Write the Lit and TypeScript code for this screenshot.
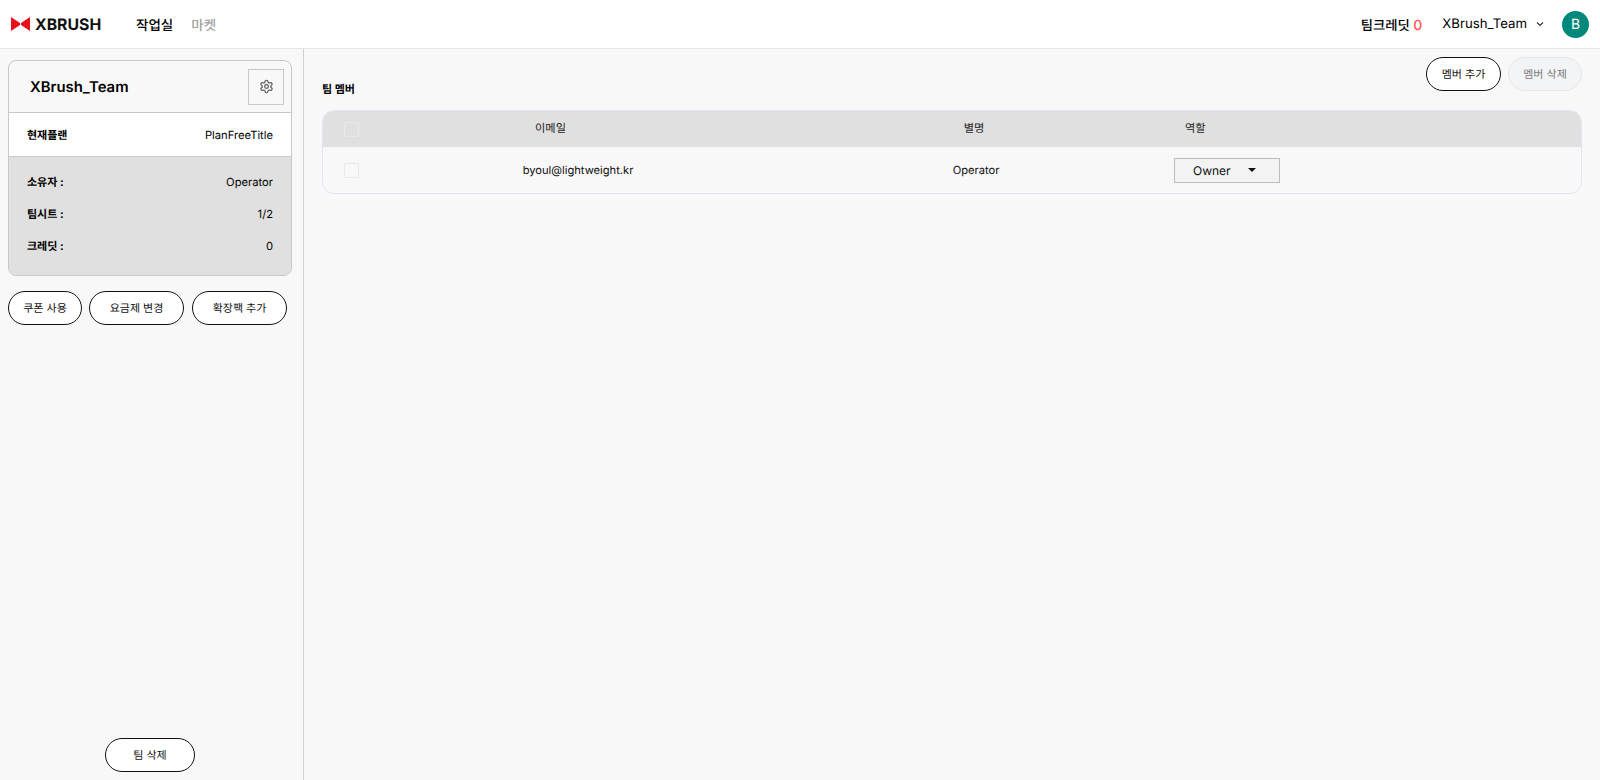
import { LitElement, html, css } from "lit";
import { customElement } from "lit/decorators.js";

@customElement("app-root")
export class AppRoot extends LitElement {
  static styles = css`
    :host {
      display: flex;
      flex-direction: column;
      width: 1600px;
      height: 780px;
      overflow: hidden;
      background: #f8f8f8;
      color: #000;
      font-family: Inter, "Noto Sans CJK KR", sans-serif;
      text-rendering: geometricPrecision;
    }
    * { box-sizing: border-box; }
    .top {
      height: 49px;
      flex: none;
      background: #fff;
      border-bottom: 1px solid #e6e6e6;
      display: flex;
      align-items: center;
      padding: 0 11px;
    }
    .logo { display: flex; align-items: center; gap: 5px; width: 125px; }
    .logo svg { display: block; }
    .logo span { font-size: 15.8px; font-weight: 700; color: #111; }
    .nav { font-size: 13.5px; font-weight: 500; margin-right: 18px; }
    .nav.off { color: #a3a3a3; }
    .spacer { flex: 1; }
    .credit { font-size: 13.33px; font-weight: 500; margin-right: 20px; }
    .credit b { color: #ff5555; font-size: 14px; font-weight: 500; }
    .team { font-size: 13.2px; margin-right: 9px; }
    .chev { margin-right: 18px; display: block; }
    .avatar {
      width: 27px; height: 27px; border-radius: 50%;
      background: #00897b; color: #fff;
      display: flex; align-items: center; justify-content: center;
      font-size: 14px;
    }
    .body { flex: 1; display: flex; min-height: 0; }
    .side {
      width: 304px;
      flex: none;
      border-right: 1px solid #d0d0d0;
      padding: 11px 8px 8px 8px;
      display: flex;
      flex-direction: column;
    }
    .card {
      width: 284px;
      height: 216px;
      border: 1px solid #c8c8c8;
      border-radius: 8px;
      overflow: hidden;
      display: flex;
      flex-direction: column;
    }
    .card-head {
      height: 52px;
      display: flex;
      align-items: center;
      justify-content: space-between;
      padding: 0 7px 0 21px;
      border-bottom: 1px solid #c8c8c8;
      font-size: 14.9px;
      font-weight: 600;
    }
    .gear {
      width: 36px; height: 36px;
      border: 1px solid #c8c8c8;
      display: flex; align-items: center; justify-content: center;
      color: #555;
    }
    .plan {
      height: 44px;
      background: #fff;
      border-bottom: 1px solid #c8c8c8;
      display: flex;
      align-items: center;
      justify-content: space-between;
      padding: 0 18px;
      font-size: 11.2px;
    }
    .k { font-weight: 700; font-size: 11px; }
    .stats {
      flex: 1;
      background: #e0e0e0;
      padding: 9px 18px 0;
      display: flex;
      flex-direction: column;
    }
    .stats div {
      height: 32px;
      display: flex;
      align-items: center;
      justify-content: space-between;
      font-size: 11.2px;
    }
    .btns { display: flex; gap: 8px; margin-top: 15px; }
    .btn {
      height: 34px;
      border: 1px solid #111;
      border-radius: 17px;
      background: #fff;
      display: flex;
      align-items: center;
      justify-content: center;
      font-size: 11px;
      color: #111;
    }
    .btn.off { background: #f3f4f6; border-color: #e5e7eb; color: #7a7a7a; }
    .coupon { width: 74px; }
    .plan-btn { width: 95px; margin-left: -1px; }
    .pack { width: 95px; }
    .team-del { width: 90px; }
    .add { width: 75px; }
    .remove { width: 74px; }
    .del-wrap { margin-top: auto; display: flex; justify-content: center; padding-right: 3px; }
    .main { flex: 1; padding: 8px 18px 0 18px; min-width: 0; }
    .main-head { display: flex; justify-content: flex-end; gap: 7px; height: 34px; }
    .title {
      margin: 0 auto -6px 0;
      align-self: flex-end;
      font-size: 11px;
      font-weight: 700;
      line-height: 16px;
    }
    .table {
      margin-top: 19px;
      border: 1px solid #e0e7f3;
      border-radius: 12px;
      overflow: hidden;
      height: 84px;
    }
    .row {
      display: grid;
      grid-template-columns: 21px 15px 1fr;
      align-items: center;
      font-size: 11.2px;
    }
    .row.h { height: 36px; background: #e0e0e0; color: #222; }
    .row.d { height: 46px; color: #111; }
    .cols { display: grid; align-items: center; }
    .h .cols { grid-template-columns: 383px 42px 380px 1fr; padding-bottom: 2px; }
    .h .c2 { grid-column: 3; }
    .h .c3 { grid-column: 4; padding-left: 21px; }
    .d .cols { grid-template-columns: 438px 358px 1fr; font-size: 11.15px; }
    .d .c3 { padding-left: 19px; }
    .c1, .c2 { text-align: center; }
    .c3 { display: flex; }
    .cb {
      width: 15px; height: 15px;
      border: 1px solid #e5e9f2;
      border-radius: 2px;
      grid-column: 2;
    }
    .select {
      width: 106px; height: 25px;
      border: 1px solid #bdbdbd;
      background: #f3f3f3;
      display: flex;
      align-items: center;
      padding-left: 18px;
      font-size: 12px;
      gap: 17px;
    }
    .caret { width: 0; height: 0; border: 4px solid transparent; border-top: 4.5px solid #111; border-bottom: 0; }
  `;

  render() {
    return html`
      <div class="top">
        <div class="logo">
          <svg width="19" height="14" viewBox="0 0 19 14">
            <path d="M0 0 L9 6 V8 L0 14 Z M19 0 L10 6 V8 L19 14 Z" fill="#e8101a"></path>
          </svg>
          <span>XBRUSH</span>
        </div>
        <span class="nav">작업실</span>
        <span class="nav off">마켓</span>
        <span class="spacer"></span>
        <span class="credit">팀크레딧 <b>0</b></span>
        <span class="team">XBrush_Team</span>
        <svg class="chev" width="8" height="8" viewBox="0 0 8 8" fill="none" stroke="#333" stroke-width="1.2">
          <path d="M1 2.5 L4 5.5 L7 2.5"></path>
        </svg>
        <div class="avatar">B</div>
      </div>
      <div class="body">
        <aside class="side">
          <section class="card">
            <div class="card-head">
              <span>XBrush_Team</span>
              <div class="gear">
                <svg width="15" height="15" viewBox="0 0 24 24" fill="none" stroke="currentColor" stroke-width="1.8" stroke-linecap="round" stroke-linejoin="round">
                  <path d="M12.22 2h-.44a2 2 0 0 0-2 2v.18a2 2 0 0 1-1 1.73l-.43.25a2 2 0 0 1-2 0l-.15-.08a2 2 0 0 0-2.73.73l-.22.38a2 2 0 0 0 .73 2.73l.15.1a2 2 0 0 1 1 1.72v.51a2 2 0 0 1-1 1.74l-.15.09a2 2 0 0 0-.73 2.73l.22.38a2 2 0 0 0 2.73.73l.15-.08a2 2 0 0 1 2 0l.43.25a2 2 0 0 1 1 1.73V20a2 2 0 0 0 2 2h.44a2 2 0 0 0 2-2v-.18a2 2 0 0 1 1-1.73l.43-.25a2 2 0 0 1 2 0l.15.08a2 2 0 0 0 2.73-.73l.22-.39a2 2 0 0 0-.73-2.73l-.15-.08a2 2 0 0 1-1-1.74v-.5a2 2 0 0 1 1-1.74l.15-.09a2 2 0 0 0 .73-2.73l-.22-.38a2 2 0 0 0-2.73-.73l-.15.08a2 2 0 0 1-2 0l-.43-.25a2 2 0 0 1-1-1.73V4a2 2 0 0 0-2-2z"></path>
                  <circle cx="12" cy="12" r="3"></circle>
                </svg>
              </div>
            </div>
            <div class="plan"><span class="k">현재플랜</span><span>PlanFreeTitle</span></div>
            <div class="stats">
              <div><span class="k">소유자 :</span><span>Operator</span></div>
              <div><span class="k">팀시트 :</span><span>1/2</span></div>
              <div><span class="k">크레딧 :</span><span>0</span></div>
            </div>
          </section>
          <div class="btns">
            <div class="btn coupon">쿠폰 사용</div>
            <div class="btn plan-btn">요금제 변경</div>
            <div class="btn pack">확장팩 추가</div>
          </div>
          <div class="del-wrap"><div class="btn team-del">팀 삭제</div></div>
        </aside>
        <main class="main">
          <div class="main-head">
            <h2 class="title">팀 멤버</h2>
            <div class="btn add">멤버 추가</div>
            <div class="btn off remove">멤버 삭제</div>
          </div>
          <div class="table">
            <div class="row h">
              <span class="cb"></span>
              <div class="cols">
                <span class="c1">이메일</span><span class="c2">별명</span><span class="c3">역할</span>
              </div>
            </div>
            <div class="row d">
              <span class="cb"></span>
              <div class="cols">
                <span class="c1">byoul@lightweight.kr</span><span class="c2">Operator</span>
                <span class="c3"><span class="select">Owner<span class="caret"></span></span></span>
              </div>
            </div>
          </div>
        </main>
      </div>
    `;
  }
}
